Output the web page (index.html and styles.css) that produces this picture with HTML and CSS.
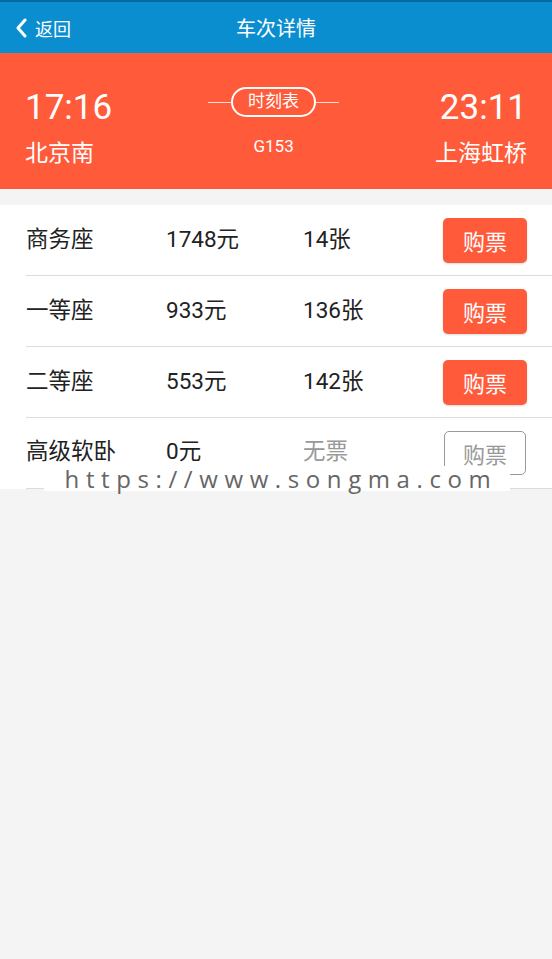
FILE: index.html
```html
<!DOCTYPE html>
<html lang="zh-CN">

<head>
    <meta charset="UTF-8">
    <meta name="viewport" content="width=device-width, initial-scale=1.0">
    <title>车次详情</title>
    <link rel="stylesheet" href="styles.css">
</head>

<body>

    <!-- Header -->
    <header class="topbar">
        <a class="back" href="#">
            <svg class="back-icon" width="12" height="20" viewBox="0 0 12 20">
                <path d="M10 2 L3 10 L10 18" fill="none" stroke="#fff" stroke-width="3" stroke-linecap="round" stroke-linejoin="round"/>
            </svg>
            <span>返回</span>
        </a>
        <h1 class="title">车次详情</h1>
    </header>

    <!-- Train summary -->
    <section class="train">
        <div class="station">
            <div class="time">17:16</div>
            <div class="name">北京南</div>
        </div>
        <div class="middle">
            <div class="schedule">
                <span class="line"></span>
                <span class="pill">时刻表</span>
                <span class="line"></span>
            </div>
            <div class="code">G153</div>
        </div>
        <div class="station right">
            <div class="time">23:11</div>
            <div class="name">上海虹桥</div>
        </div>
    </section>

    <!-- Seat list -->
    <ul class="seats">
        <li class="seat">
            <span class="seat-name">商务座</span>
            <span class="seat-price">1748元</span>
            <span class="seat-count">14张</span>
            <button class="buy">购票</button>
        </li>
        <li class="seat">
            <span class="seat-name">一等座</span>
            <span class="seat-price">933元</span>
            <span class="seat-count">136张</span>
            <button class="buy">购票</button>
        </li>
        <li class="seat">
            <span class="seat-name">二等座</span>
            <span class="seat-price">553元</span>
            <span class="seat-count">142张</span>
            <button class="buy">购票</button>
        </li>
        <li class="seat">
            <span class="seat-name">高级软卧</span>
            <span class="seat-price">0元</span>
            <span class="seat-count none">无票</span>
            <button class="buy disabled">购票</button>
        </li>
    </ul>

    <!-- Watermark -->
    <div class="watermark">https://www.songma.com</div>

</body>

</html>
```

FILE: styles.css
```css
/* General Reset */
* {
    margin: 0;
    padding: 0;
    box-sizing: border-box;
}

body {
    font-family: Roboto, "Noto Sans CJK SC", sans-serif;
    background-color: #f4f4f4;
    color: #222;
    width: 552px;
    min-height: 959px;
    position: relative;
}

/* Header */
.topbar {
    height: 53px;
    background: #0b8ed0;
    border-top: 2px solid #07679f;
    display: flex;
    align-items: center;
    justify-content: center;
    position: relative;
    color: #fff;
}

.back {
    position: absolute;
    left: 15px;
    top: 0;
    bottom: 0;
    display: flex;
    align-items: center;
    gap: 8px;
    color: #fff;
    text-decoration: none;
    font-size: 18px;
}

.title {
    font-size: 20px;
    font-weight: normal;
}

/* Train summary */
.train {
    height: 136px;
    background: #ff5b3b;
    color: #fff;
    display: flex;
    justify-content: space-between;
    padding: 32px 25px 0 25px;
}

.time {
    font-size: 35px;
    line-height: 46px;
}

.name {
    font-size: 23px;
    line-height: 30px;
    margin-top: 8px;
}

.right {
    text-align: right;
}

.middle {
    display: flex;
    flex-direction: column;
    align-items: center;
    padding-top: 2px;
}

.schedule {
    display: flex;
    align-items: center;
}

.line {
    width: 23px;
    height: 1px;
    background: rgba(255, 255, 255, 0.8);
}

.pill {
    border: 2px solid #fff;
    border-radius: 15px;
    padding: 0 15px;
    height: 30px;
    line-height: 25px;
    font-size: 17px;
}

.code {
    font-size: 17px;
    margin-top: 19px;
}

/* Seat list */
.seats {
    list-style: none;
    background: #fff;
    margin-top: 16px;
    padding-left: 26px;
}

.seat {
    height: 71px;
    display: flex;
    align-items: center;
    border-bottom: 1px solid #dcdcdc;
    font-size: 22.5px;
    padding-right: 25px;
}

.seat span {
    line-height: 26px;
    margin-bottom: 3px;
}

.seat:last-child span {
    margin-bottom: 4px;
}

.seat-name {
    width: 140px;
}

.seat-price {
    width: 137px;
}

.seat-count {
    flex: 1;
}

.none {
    color: #999;
}

.buy {
    width: 84px;
    height: 45px;
    border: none;
    border-radius: 5px;
    background: #ff5b3b;
    color: #fff;
    font-family: inherit;
    font-size: 22px;
    box-shadow: 0 1px 2px rgba(0, 0, 0, 0.15);
}

.buy.disabled {
    background: #fff;
    color: #999;
    border: 1px solid #999;
    box-shadow: none;
    width: 82px;
    height: 44px;
    margin-right: 1px;
}

/* Watermark */
.watermark {
    position: absolute;
    left: 44px;
    top: 466px;
    width: 466px;
    height: 25px;
    padding-left: 8px;
    background: #fff;
    color: #666;
    font-family: "Open Sans", sans-serif;
    font-size: 24px;
    line-height: 25px;
    letter-spacing: 6.6px;
    text-align: center;
}
```
